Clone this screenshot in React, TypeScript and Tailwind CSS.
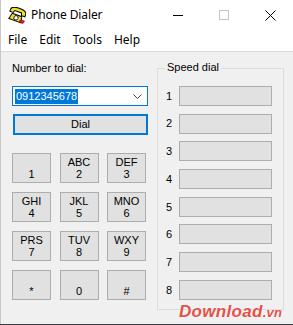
import React from "react";

const keys = [
  ["", "1"],
  ["ABC", "2"],
  ["DEF", "3"],
  ["GHI", "4"],
  ["JKL", "5"],
  ["MNO", "6"],
  ["PRS", "7"],
  ["TUV", "8"],
  ["WXY", "9"],
  ["", "*"],
  ["", "0"],
  ["", "#"],
];

function PhoneIcon() {
  return (
    <svg width="18" height="17" viewBox="0 0 18 17">
      <g transform="rotate(20 9 8)">
        <path
          d="M1 5 C1 2 4 1 8 1 L10 1 C14 1 17 2 17 5 L17 7 L13.5 7 L12.5 4.5 L5.5 4.5 L4.5 7 L1 7 Z"
          fill="#f2dc3a"
          stroke="#000"
          strokeWidth="1"
        />
        <path d="M4 8 L14 8 L15.5 14 L2.5 14 Z" fill="#f2dc3a" stroke="#000" strokeWidth="1" />
        <circle cx="9" cy="11" r="2.2" fill="#fff" stroke="#000" strokeWidth="0.8" />
      </g>
      <path d="M12 13 L16.5 14 L15 16.5 L11 15 Z" fill="#e02020" stroke="#700" strokeWidth="0.6" />
    </svg>
  );
}

export default function App() {
  const font = { fontFamily: '"Liberation Sans", Arial, sans-serif' };
  return (
    <div className="relative w-[293px] h-[325px] bg-[#3b3f45] overflow-hidden">
      <div className="w-[293px] h-[324px] bg-[#f0f0f0] border-l border-[#c8c8c8] flex flex-col">
        {/* Title bar */}
        <div
          className="h-[30px] bg-white flex items-center"
          style={{ fontFamily: '"Segoe UI", "Noto Sans", sans-serif' }}
        >
          <div className="ml-[7px] w-[18px] h-[17px] flex items-center">
            <PhoneIcon />
          </div>
          <span className="ml-[5px] text-[12px] text-black tracking-[-0.1px]">Phone Dialer</span>
          <div className="ml-auto flex h-full">
            <div className="w-[46px] h-full flex items-center justify-center">
              <div className="w-[10px] h-px bg-black" />
            </div>
            <div className="w-[46px] h-full flex items-center justify-center">
              <div className="w-[10px] h-[10px] border border-[#c4c4c4]" />
            </div>
            <div className="w-[46px] h-full flex items-center justify-center">
              <svg width="11" height="11" viewBox="0 0 11 11">
                <path d="M0.5 0.5 L10.5 10.5 M10.5 0.5 L0.5 10.5" stroke="#000" strokeWidth="1" />
              </svg>
            </div>
          </div>
        </div>
        {/* Menu */}
        <div
          className="h-[20px] bg-white flex items-center pl-[7px] gap-[12px] text-[12px] text-black"
          style={{ fontFamily: '"Segoe UI", "Noto Sans", sans-serif' }}
        >
          <span>File</span>
          <span>Edit</span>
          <span>Tools</span>
          <span>Help</span>
        </div>
        <div className="h-px bg-white" />
        <div className="h-px bg-[#dadada]" />

        {/* Body */}
        <div className="flex text-[11px] text-black" style={font}>
          <div className="ml-[11px] w-[136px] flex flex-col">
            <div className="mt-[10px] leading-[13px]">Number to dial:</div>
            <div className="mt-[11px] h-[20px] bg-white border border-[#0078d7] flex items-center pl-[2px] pr-[5px]">
              <span className="bg-[#0078d7] text-white leading-[15px] px-px">0912345678</span>
              <svg className="ml-auto" width="9" height="5" viewBox="0 0 9 5">
                <path d="M0.5 0.5 L4.5 4.5 L8.5 0.5" stroke="#444" strokeWidth="1" fill="none" />
              </svg>
            </div>
            <div className="mt-[8px] ml-[1px] h-[21px] bg-[#e1e1e1] border-2 border-[#0078d7] flex items-center justify-center">
              Dial
            </div>
            <div className="mt-[18px] grid grid-cols-[39px_39px_39px] gap-x-[8.5px] gap-y-[9px]">
              {keys.map(([l, n], i) => (
                <div
                  key={i}
                  className="h-[30px] bg-[#e1e1e1] border border-[#adadad] flex flex-col items-center justify-center leading-[12px] text-[#000]"
                >
                  <span>{l || "\u00a0"}</span>
                  <span>{n}</span>
                </div>
              ))}
            </div>
          </div>

          {/* Speed dial */}
          <div className="ml-[9px] mt-[16px] w-[127px] h-[242px] relative border border-[#dcdcdc]">
            <span className="absolute left-[7px] top-[-8px] px-[2px] bg-[#f0f0f0] leading-[13px]">
              Speed dial
            </span>
            <div className="pt-[17px] flex flex-col gap-[7.7px]">
              {[1, 2, 3, 4, 5, 6, 7, 8].map((n) => (
                <div key={n} className="flex items-center h-[20px]">
                  <span className="ml-[8px] w-[13px]">{n}</span>
                  <div className="h-[20px] w-[93px] bg-[#e1e1e1] border border-[#adadad]" />
                </div>
              ))}
            </div>
          </div>
        </div>
      </div>
      {/* Watermark */}
      <div
        className="absolute left-[179px] top-[302px] text-[17px] font-bold italic text-[#e4514a] leading-[20px] tracking-[0.3px]"
        style={{ fontFamily: '"Liberation Sans", Arial, sans-serif', textShadow: "0 0 2px #fff" }}
      >
        Download<span className="text-[13px]">.vn</span>
      </div>
    </div>
  );
}
